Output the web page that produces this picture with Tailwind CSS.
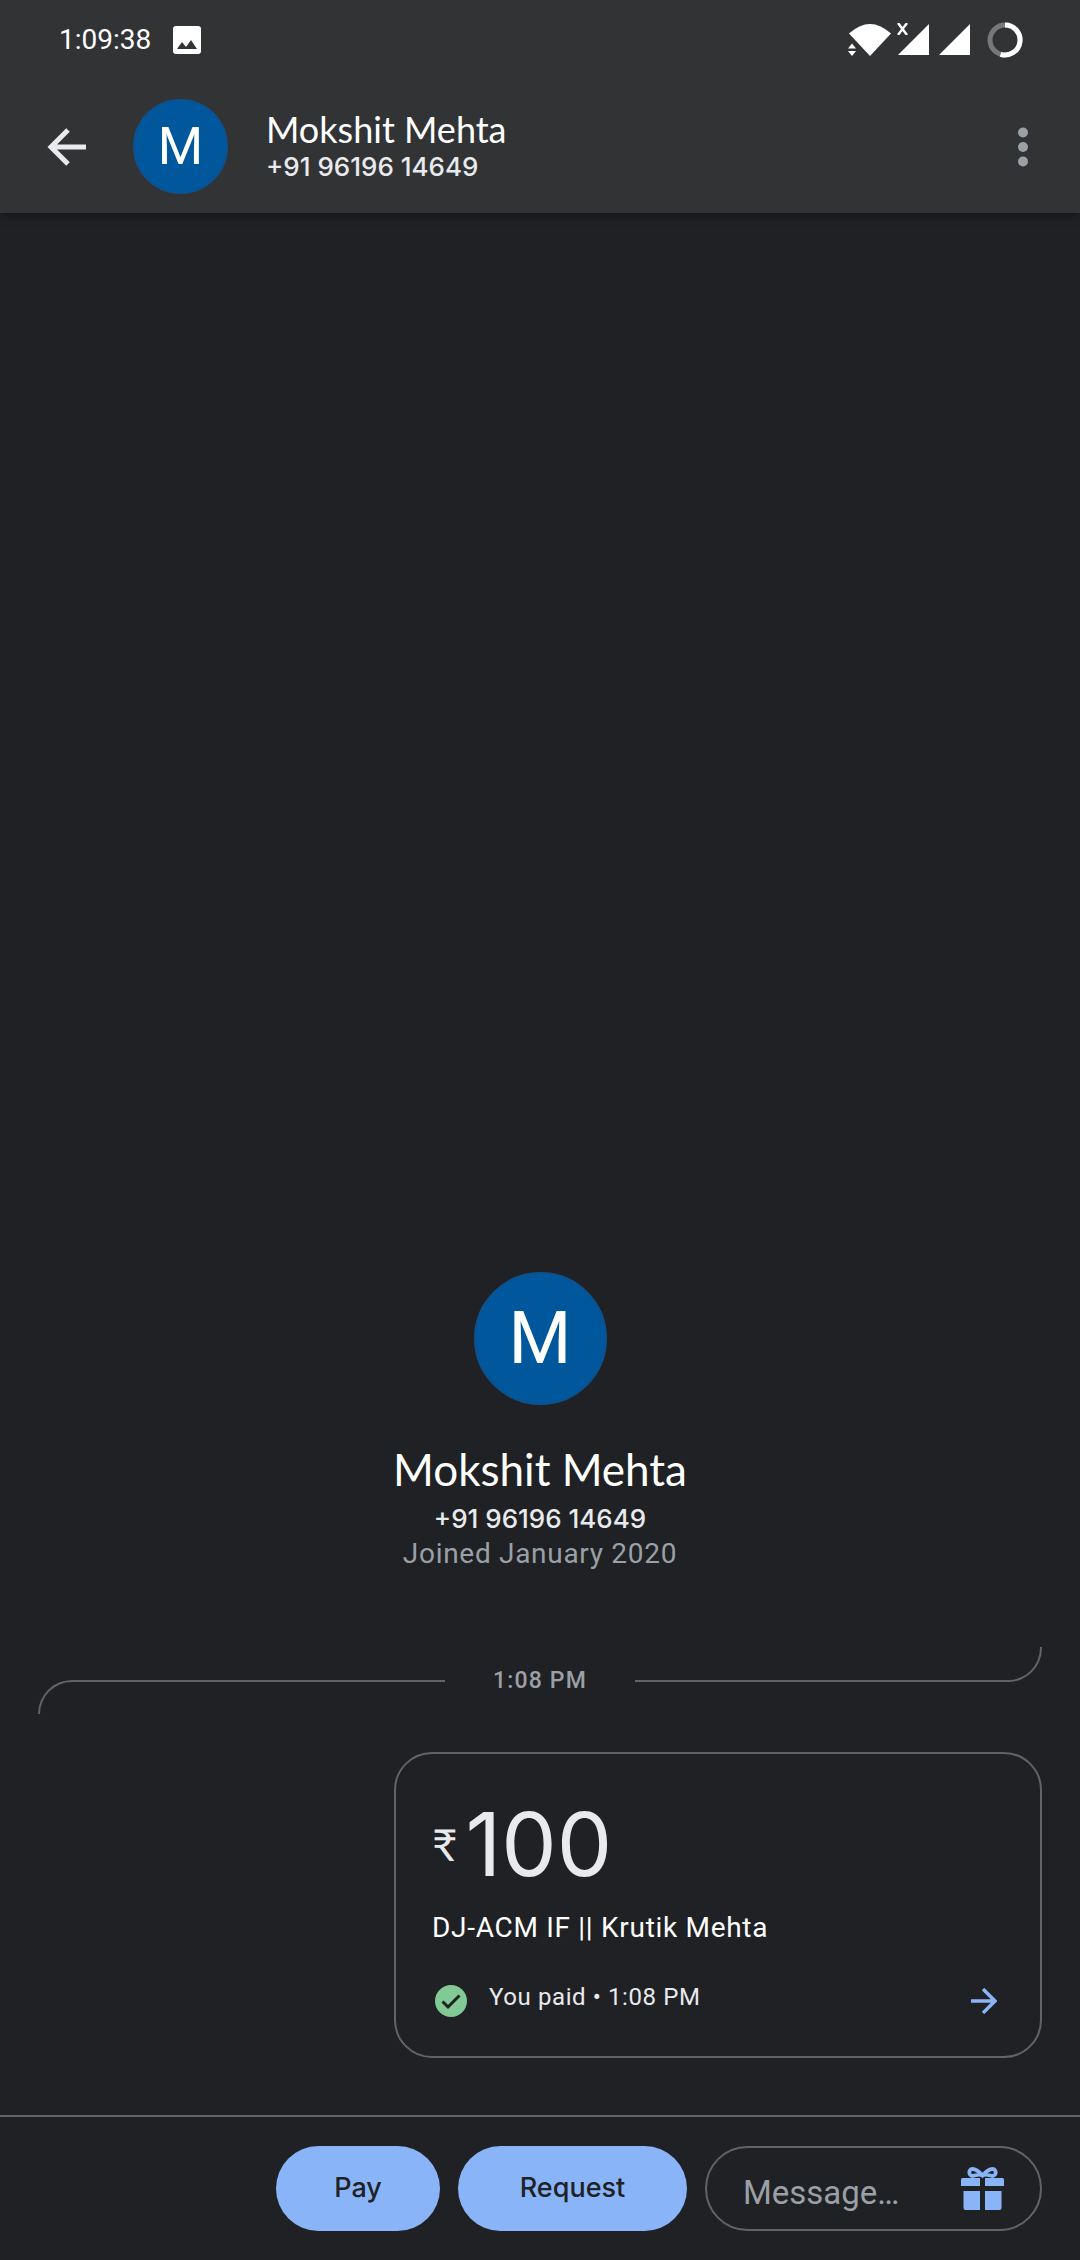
<!DOCTYPE html>
<html lang="en">
<head>
<meta charset="utf-8">
<meta name="viewport" content="width=device-width, initial-scale=1">
<title>Mokshit Mehta</title>
<script src="https://cdn.jsdelivr.net/npm/@tailwindcss/browser@4"></script>
</head>
<body class="flex min-h-screen flex-col bg-[#202124] font-[Roboto,sans-serif] text-white">

<header class="z-10 bg-[#323335] shadow-[0_2px_10px_rgba(0,0,0,0.4)]">
  <!-- Status bar -->
  <div class="flex h-20 items-center pr-[57px] pl-[59px]">
    <span class="text-[28px] leading-10">1:09:38</span>
    <svg class="ml-[22px] size-7" viewBox="0 0 28 28" aria-hidden="true"><rect width="28" height="28" rx="3" fill="#fff"/><path d="M4 23l5-7 4 5 5-7 6 9z" fill="#323335"/></svg>
    <div class="ml-auto flex items-center" aria-hidden="true">
      <svg class="h-8 w-[44px]" viewBox="0 0 44 32"><path d="M1 9.500Q22-9.500 43 9.500L22 32z" fill="#fff"/><path d="M-1 20H8.500V32H-1z" fill="#323335"/><path d="M0 24.500L4 19.500 8 24.500zM0 27L4 32 8 27z" fill="#fff"/></svg>
      <div class="relative ml-[6px]">
        <svg class="h-8 w-[31px]" viewBox="0 0 31 32"><path d="M0 31L31 0V31z" fill="#fff"/></svg>
        <svg class="absolute -top-px -left-px h-[12px] w-[11px]" viewBox="0 0 11 12"><path d="M1 0L10 12M10 0L1 12" stroke="#fff" stroke-width="2.400"/></svg>
      </div>
      <svg class="ml-[10px] h-8 w-[31px]" viewBox="0 0 31 32"><path d="M0 31L31 0V31z" fill="#fff"/></svg>
      <svg class="ml-[17px] size-9" viewBox="0 0 36 36" fill="none" stroke-width="5"><circle cx="18" cy="18" r="15" stroke="#77787a"/><path d="M18 3A15 15 0 1 1 13.500 32.300" stroke="#fff"/></svg>
    </div>
  </div>
  <!-- Contact bar -->
  <div class="flex h-[133px] items-start pt-[19px] pr-[47px] pl-[47px]">
    <button type="button" aria-label="Back" class="flex h-24 items-center"><svg class="h-[38px] w-[39px]" viewBox="0 0 39 38" fill="none" stroke="#e8eaed" stroke-width="5"><path d="M39 19H4M21 2L4 19 21 36"/></svg></button>
    <div class="ml-[47px] flex size-[95px] items-center justify-center rounded-full border-2 border-[#0b5291] bg-[#01579b] text-[52px] leading-none">M</div>
    <div class="ml-[38px]">
      <h1 class="mt-[9px] font-[Lato,sans-serif] text-[36px] leading-[42px]">Mokshit Mehta</h1>
      <p class="font-[Inter,sans-serif] text-[26px] leading-[34px] font-medium text-[#e8eaed]">+91 96196 14649</p>
    </div>
    <button type="button" aria-label="More options" class="ml-auto flex h-24 items-center pr-[5px]"><svg class="h-10 w-[10px]" viewBox="0 0 10 40" fill="#9aa0a6"><circle cx="5" cy="5.500" r="5"/><circle cx="5" cy="20" r="5"/><circle cx="5" cy="34.500" r="5"/></svg></button>
  </div>
</header>

<main class="flex flex-1 flex-col justify-end px-[38px] pb-[57px]">
  <section class="flex flex-col items-center">
    <div class="flex size-[133px] items-center justify-center rounded-full border-2 border-[#0b5291] bg-[#01579b] text-[72px] leading-none">M</div>
    <h2 class="mt-9 font-[Lato,sans-serif] text-[44px] leading-[56px]">Mokshit Mehta</h2>
    <p class="mt-[5px] font-[Inter,sans-serif] text-[26px] leading-[34px] font-medium text-[#e8eaed]">+91 96196 14649</p>
    <p class="text-[28px] leading-[36px] tracking-wide text-[#9aa0a6]">Joined January 2020</p>
  </section>

  <!-- Time divider -->
  <div class="mt-[75px] flex items-center">
    <div class="h-[67px] flex-1 pt-[33px]"><div class="h-[34px] rounded-tl-[34px] border-t-2 border-l-2 border-[#626365]"></div></div>
    <time class="px-12 text-[23px] leading-8 font-medium tracking-wider text-[#9aa0a6]">1:08 PM</time>
    <div class="h-[67px] flex-1"><div class="h-[35px] rounded-br-[34px] border-r-2 border-b-2 border-[#626365]"></div></div>
  </div>

  <!-- Payment -->
  <article class="mt-[38px] ml-auto w-[648px] max-w-full rounded-[38px] border-2 border-[#626365] px-9 pt-[42px] pb-[39px]">
    <p class="flex items-center gap-2 text-[#e8eaed]">
      <span class="font-[Lato,sans-serif] text-[44px] leading-[96px]">₹</span><span class="font-[Inter,sans-serif] text-[88px] leading-[96px]">100</span>
    </p>
    <p class="mt-4 text-[28px] leading-[40px] tracking-wide">DJ-ACM IF || Krutik Mehta</p>
    <div class="mt-[29px] flex items-center">
      <svg class="mt-2 ml-[3px] size-8" viewBox="0 0 32 32" aria-hidden="true"><circle cx="16" cy="16" r="16" fill="#81c995"/><path d="M7.500 16.500l5.500 5.500L24.500 10.500" fill="none" stroke="#202124" stroke-width="3"/></svg>
      <p class="ml-[22px] text-[24px] leading-8 tracking-wide text-[#e8eaed]">You paid • 1:08 PM</p>
      <a href="#" aria-label="Payment details" class="mt-2 mr-[7px] ml-auto"><svg class="size-[26px]" viewBox="0 0 26 26" fill="none" stroke="#8ab4f8" stroke-width="3.400"><path d="M0 13H24M12 1L24 13 12 25"/></svg></a>
    </div>
  </article>
</main>

<footer class="flex items-center justify-end gap-[18px] border-t-2 border-[#626365] px-[38px] pt-[29px] pb-[29px]">
  <button type="button" class="h-[85px] w-[164px] rounded-full bg-[#8ab4f8] font-[Inter,sans-serif] text-[27px] font-medium text-[#202124]">Pay</button>
  <button type="button" class="h-[85px] w-[229px] rounded-full bg-[#8ab4f8] font-[Inter,sans-serif] text-[27px] font-medium text-[#202124]">Request</button>
  <div class="flex h-[85px] w-[337px] items-center rounded-full border-2 border-[#626365] pr-9 pl-9">
    <input type="text" aria-label="Message" placeholder="Message…" class="min-w-0 flex-1 pt-2 text-[33px] leading-10 outline-none placeholder:text-[#9aa0a6]">
    <button type="button" aria-label="Send a gift"><svg class="size-[43px]" viewBox="0 0 43 43" fill="#8ab4f8"><path d="M0 12.500Q0 11 1.500 11H19V19H0zM24 11H41.500Q43 11 43 12.500V19H24zM2.500 24H19V43H4.500Q2.500 43 2.500 41zM24 24H40.500V41Q40.500 43 38.500 43H24z"/><path d="M21.500 8.500C17 3.500 14 2 11.500 2 7 2 7.500 9 11.500 9 14.500 9 17 6 21.500 8.500 26 6 28.500 9 31.500 9 35.500 9 36 2 31.500 2 29 2 26 3.500 21.500 8.500z" fill="none" stroke="#8ab4f8" stroke-width="3.800"/></svg></button>
  </div>
</footer>
</body>
</html>
